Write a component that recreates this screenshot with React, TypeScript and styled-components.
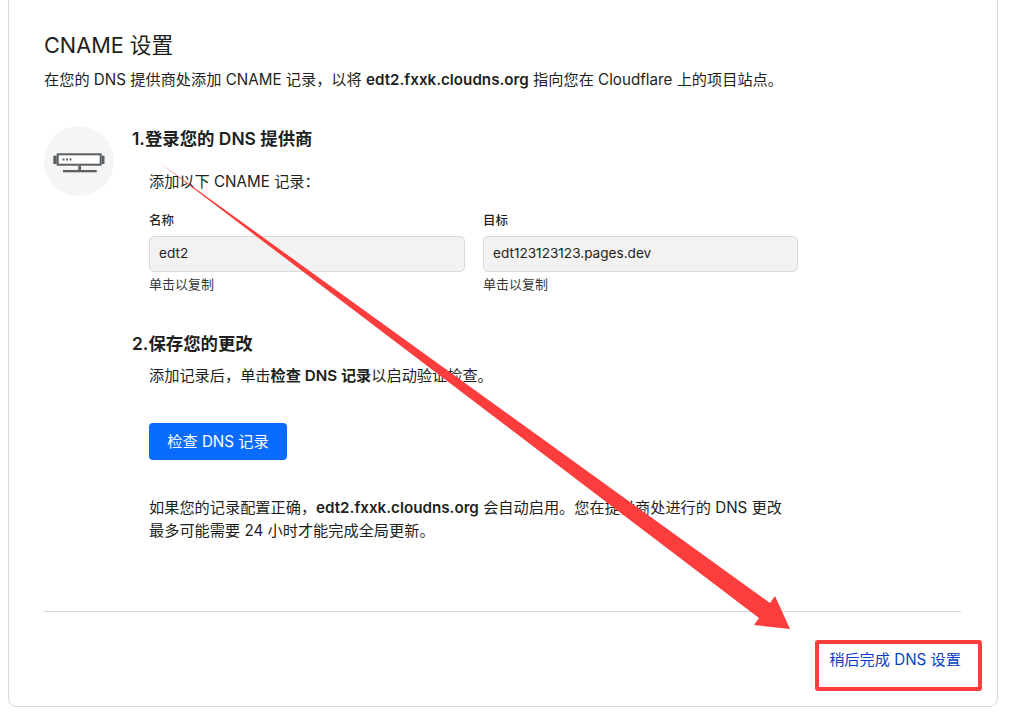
import styled, { createGlobalStyle } from 'styled-components';

const GlobalStyle = createGlobalStyle`
  html, body {
    margin: 0;
    padding: 0;
    background: #ffffff;
    overflow: hidden;
  }
  body {
    font-family: Inter, "Noto Sans CJK SC", sans-serif;
    color: #1d1f20;
  }
  * { box-sizing: border-box; }
`;

const Page = styled.div`
  position: relative;
  width: 1025px;
  height: 727px;
  overflow: hidden;
  padding: 0 27px 20px 8px;
  display: flex;
  align-items: flex-end;
`;

const Card = styled.section`
  width: 990px;
  height: 730px;
  border: 1px solid #d9d9d9;
  border-radius: 8px;
  padding: 52px 36px 0 35px;
  display: flex;
  flex-direction: column;
  flex-shrink: 0;
`;

const Title = styled.h2`
  font-size: 21.7px;
  font-weight: 400;
  line-height: 30px;
  margin: 0 0 9px;
  color: #1d1f20;
`;

const Lead = styled.p`
  font-size: 15.2px;
  line-height: 22px;
  margin: 0 0 35px;

  b { font-weight: 600; }
`;

const Body = styled.div`
  display: flex;
  align-items: flex-start;
`;

const IconCircle = styled.div`
  width: 70px;
  height: 70px;
  border-radius: 50%;
  background: #f5f5f5;
  display: flex;
  align-items: center;
  justify-content: center;
  flex-shrink: 0;
  margin-right: 18px;
`;

const Steps = styled.div`
  flex: 1;
`;

const StepTitle = styled.h3`
  font-size: 17.4px;
  font-weight: 600;
  line-height: 26px;
  margin: 0;
`;

const StepBody = styled.div`
  padding-left: 17px;
`;

const Text = styled.p<{ $top?: number }>`
  font-size: 15.2px;
  line-height: 23px;
  margin: ${p => p.$top ?? 0}px 0 0;

  b { font-weight: 600; }
`;

const Fields = styled.div`
  display: flex;
  gap: 18px;
  margin-top: 19px;
`;

const Field = styled.div<{ $width: number }>`
  width: ${p => p.$width}px;
`;

const FieldLabel = styled.div`
  font-size: 12.5px;
  font-weight: 500;
  line-height: 18px;
  margin-bottom: 6px;
`;

const FieldValue = styled.div`
  height: 36px;
  background: #f2f2f2;
  border: 1px solid #d9d9d9;
  border-radius: 5px;
  padding: 0 9px;
  font-size: 13.6px;
  line-height: 33px;
  color: #1d1f20;
`;

const Hint = styled.div`
  font-size: 13px;
  line-height: 18px;
  margin-top: 3px;
  color: #36393a;
`;

const SecondTitle = styled(StepTitle)`
  margin-top: 38px;
  margin-bottom: 7px;
`;

const PrimaryButton = styled.button`
  display: block;
  height: 37px;
  width: 138px;
  margin: 36px 0 36px;
  padding: 0 0 3px;
  border: none;
  border-radius: 4px;
  background: #0a6cff;
  color: #ffffff;
  font-family: inherit;
  font-size: 15.2px;
`;

const Divider = styled.hr`
  border: none;
  border-top: 1px solid #d9d9d9;
  margin: 69px 0 0;
`;

const Footer = styled.div`
  display: flex;
  justify-content: flex-end;
  padding: 38px 0 0;
`;

const LaterLink = styled.a`
  font-size: 15.2px;
  line-height: 20px;
  color: #0a3fc4;
`;

/* annotation layers drawn over the page */
const ArrowOverlay = styled.svg`
  position: absolute;
  inset: 0;
  pointer-events: none;
`;

const Highlight = styled.div`
  position: absolute;
  left: 815px;
  top: 640px;
  width: 167px;
  height: 51px;
  border: 4px solid #fc3d3d;
  border-radius: 3px;
  pointer-events: none;
`;

export default function App() {
  return (
    <>
      <GlobalStyle />
      <Page>
        <Card>
          <Title>CNAME 设置</Title>
          <Lead>
            在您的 DNS 提供商处添加 CNAME 记录，以将 <b>edt2.fxxk.cloudns.org</b> 指向您在 Cloudflare 上的项目站点。
          </Lead>
          <Body>
            <IconCircle>
              <svg width="52" height="24" viewBox="0 0 52 24" fill="none">
                <rect x="0.3" y="6.7" width="3.4" height="8.3" fill="#5a5f63" />
                <rect x="4.7" y="5.3" width="43" height="10.4" fill="#fff" stroke="#5a5f63" strokeWidth="2" />
                <rect x="48.7" y="6.7" width="2.8" height="8.3" fill="#5a5f63" />
                <rect x="9.5" y="9.5" width="2" height="2" fill="#5a5f63" />
                <rect x="13" y="9.5" width="2" height="2" fill="#5a5f63" />
                <rect x="16.5" y="9.5" width="2" height="2" fill="#5a5f63" />
                <rect x="25.3" y="16.7" width="2.7" height="4.5" fill="#5a5f63" />
                <rect x="10" y="21" width="33.7" height="2.3" fill="#5a5f63" />
              </svg>
            </IconCircle>
            <Steps>
              <StepTitle>1.登录您的 DNS 提供商</StepTitle>
              <StepBody>
                <Text $top={18}>添加以下 CNAME 记录：</Text>
                <Fields>
                  <Field $width={316}>
                    <FieldLabel>名称</FieldLabel>
                    <FieldValue>edt2</FieldValue>
                    <Hint>单击以复制</Hint>
                  </Field>
                  <Field $width={315}>
                    <FieldLabel>目标</FieldLabel>
                    <FieldValue>edt123123123.pages.dev</FieldValue>
                    <Hint>单击以复制</Hint>
                  </Field>
                </Fields>
              </StepBody>
              <SecondTitle>2.保存您的更改</SecondTitle>
              <StepBody>
                <Text>添加记录后，单击<b>检查 DNS 记录</b>以启动验证检查。</Text>
                <PrimaryButton>检查 DNS 记录</PrimaryButton>
                <Text>
                  如果您的记录配置正确，<b>edt2.fxxk.cloudns.org</b> 会自动启用。您在提供商处进行的 DNS 更改
                  <br />
                  最多可能需要 24 小时才能完成全局更新。
                </Text>
              </StepBody>
            </Steps>
          </Body>
          <Divider />
          <Footer>
            <LaterLink>稍后完成 DNS 设置</LaterLink>
          </Footer>
        </Card>
        <ArrowOverlay width="1025" height="727" viewBox="0 0 1025 727">
          <polygon points="160,163 770,603 775,596 790,629 754,625 759,618" fill="#fc3d3d" />
        </ArrowOverlay>
        <Highlight />
      </Page>
    </>
  );
}
